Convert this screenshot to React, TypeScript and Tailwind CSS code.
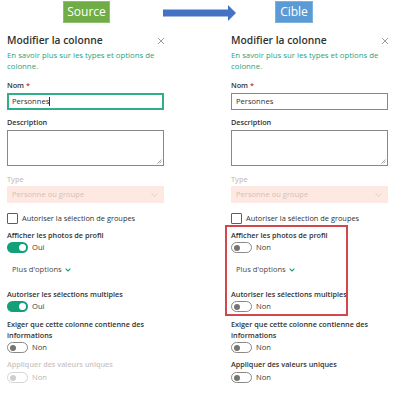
import React from "react";

function Toggle({ on, disabled }: { on?: boolean; disabled?: boolean }) {
  if (on) {
    return (
      <div className="w-[21px] h-[11px] rounded-full bg-[#12a078] flex items-center justify-end pr-[2px]">
        <div className="w-[7px] h-[7px] rounded-full bg-white" />
      </div>
    );
  }
  return (
    <div
      className={
        "w-[21px] h-[11px] rounded-full border bg-white flex items-center pl-[2px] " +
        (disabled ? "border-[#d6d4d2]" : "border-[#8a8886]")
      }
    >
      <div className={"w-[6px] h-[6px] rounded-full " + (disabled ? "bg-[#d0cecc]" : "bg-[#767472]")} />
    </div>
  );
}

function ToggleRow({ on, disabled }: { on?: boolean; disabled?: boolean }) {
  return (
    <div className="flex items-center gap-[4px]">
      <Toggle on={on} disabled={disabled} />
      <span className={"text-[7.6px] leading-[11px] " + (disabled ? "text-[#b9b7b5]" : "text-[#3b3a39]")}>
        {on ? "Oui" : "Non"}
      </span>
    </div>
  );
}

function Label({ children, className = "" }: { children: React.ReactNode; className?: string }) {
  return <div className={"text-[7.25px] leading-[11px] font-semibold text-[#323130] " + className}>{children}</div>;
}

function Panel({ source }: { source: boolean }) {
  return (
    <div className="relative w-[157px] flex flex-col">
      <div className="mt-[9px] flex items-center justify-between h-[15px]">
        <span className="text-[10.3px] leading-[15px] font-semibold text-[#323130]">Modifier la colonne</span>
        <svg width="8" height="8" viewBox="0 0 8 8" className="mr-[-1px]">
          <path d="M1 1L7 7M7 1L1 7" stroke="#8a8886" strokeWidth="0.8" />
        </svg>
      </div>
      <div className="mt-[2px] text-[7.8px] leading-[11px] text-[#1fa37c]">
        En savoir plus sur les types et options de colonne.
      </div>
      <Label className="mt-[8px]">
        Nom <span className="text-[#c4314b]">*</span>
      </Label>
      <div
        className={
          "mt-[2px] h-[17px] bg-white flex items-center " +
          (source ? "border-2 border-[#2fae8a] pl-[3px]" : "border border-[#8a8886] pl-[4px]")
        }
      >
        <span className="text-[7.6px] leading-[11px] text-[#323130]">Personnes</span>
        {source && <span className="w-[1px] h-[9px] bg-[#323130]" />}
      </div>
      <Label className="mt-[7px]">Description</Label>
      <div className="mt-[2px] h-[36px] border border-[#8a8886] bg-white flex items-end justify-end">
        <svg width="5" height="5" viewBox="0 0 5 5" className="mb-[1px] mr-[1px]">
          <path d="M0.5 4.5L4.5 0.5M2.5 4.5L4.5 2.5" stroke="#6b6967" strokeWidth="0.6" />
        </svg>
      </div>
      <div className="mt-[8px] text-[7.25px] leading-[11px] font-semibold text-[#c8c6c4]">Type</div>
      <div className="mt-[1px] h-[17px] bg-[#fde9e2] flex items-center justify-between pl-[5px] pr-[6px]">
        <span className="text-[7.6px] leading-[11px] text-[#dbbcb2]">Personne ou groupe</span>
        <svg width="7" height="4" viewBox="0 0 7 4">
          <path d="M0.5 0.5L3.5 3.3L6.5 0.5" stroke="#d9c2ba" strokeWidth="0.7" fill="none" />
        </svg>
      </div>
      <div className="mt-[10px] flex items-center gap-[4px] h-[11px]">
        <div className="w-[11px] h-[11px] border border-[#605e5c] rounded-[1px] bg-white" />
        <span className="text-[7.4px] leading-[11px] text-[#323130]">Autoriser la sélection de groupes</span>
      </div>
      <Label className="mt-[6px]">Afficher les photos de profil</Label>
      <div className="mt-[1px]">
        <ToggleRow on={source} />
      </div>
      <div className="mt-[11px] pl-[5px] flex items-center gap-[3px]">
        <span className="text-[7.6px] leading-[11px] text-[#4a4847]">Plus d'options</span>
        <svg width="6" height="4" viewBox="0 0 6 4">
          <path d="M0.6 0.6L3 3L5.4 0.6" stroke="#12a078" strokeWidth="1.1" fill="none" />
        </svg>
      </div>
      <Label className="mt-[14px]">Autoriser les sélections multiples</Label>
      <div className="mt-[1px]">
        <ToggleRow on={source} />
      </div>
      <div className="mt-[7px] text-[7.25px] leading-[10.5px] font-semibold text-[#323130]">
        Exiger que cette colonne contienne des informations
      </div>
      <div className="mt-[2px]">
        <ToggleRow />
      </div>
      <div
        className={
          "mt-[6px] text-[7.25px] leading-[11px] font-semibold " + (source ? "text-[#c8c6c4]" : "text-[#323130]")
        }
      >
        Appliquer des valeurs uniques
      </div>
      <div className="mt-[2px]">
        <ToggleRow disabled={source} />
      </div>
      {!source && (
        <div className="absolute left-[-6px] top-[201px] w-[123px] h-[91px] border-2 border-solid border-[color:#d2474c]" />
      )}
    </div>
  );
}

export default function App() {
  return (
    <div
      className="w-[396px] h-[400px] bg-white overflow-hidden"
      style={{ fontFamily: '"Open Sans", "Noto Sans", sans-serif' }}
    >
      <div className="h-[24px] flex items-start pt-[1px]">
        <div className="ml-[63px] w-[47px] h-[22px] bg-[#70ad47] border border-[#8cc06a] flex items-center justify-center">
          <span className="text-[12px] text-white leading-none">Source</span>
        </div>
        <svg width="73" height="16" viewBox="0 0 73 16" className="ml-[53px] mt-[4px]">
          <path d="M0 4.5H65V0L73 8L65 16V11.5H0Z" fill="#4472c4" />
        </svg>
        <div className="ml-[39px] w-[38px] h-[22px] bg-[#5b9bd5] border border-[#7fb1e0] flex items-center justify-center">
          <span className="text-[12px] text-white leading-none">Cible</span>
        </div>
      </div>
      <div className="flex pl-[7px] gap-[67px]">
        <Panel source={true} />
        <Panel source={false} />
      </div>
    </div>
  );
}
